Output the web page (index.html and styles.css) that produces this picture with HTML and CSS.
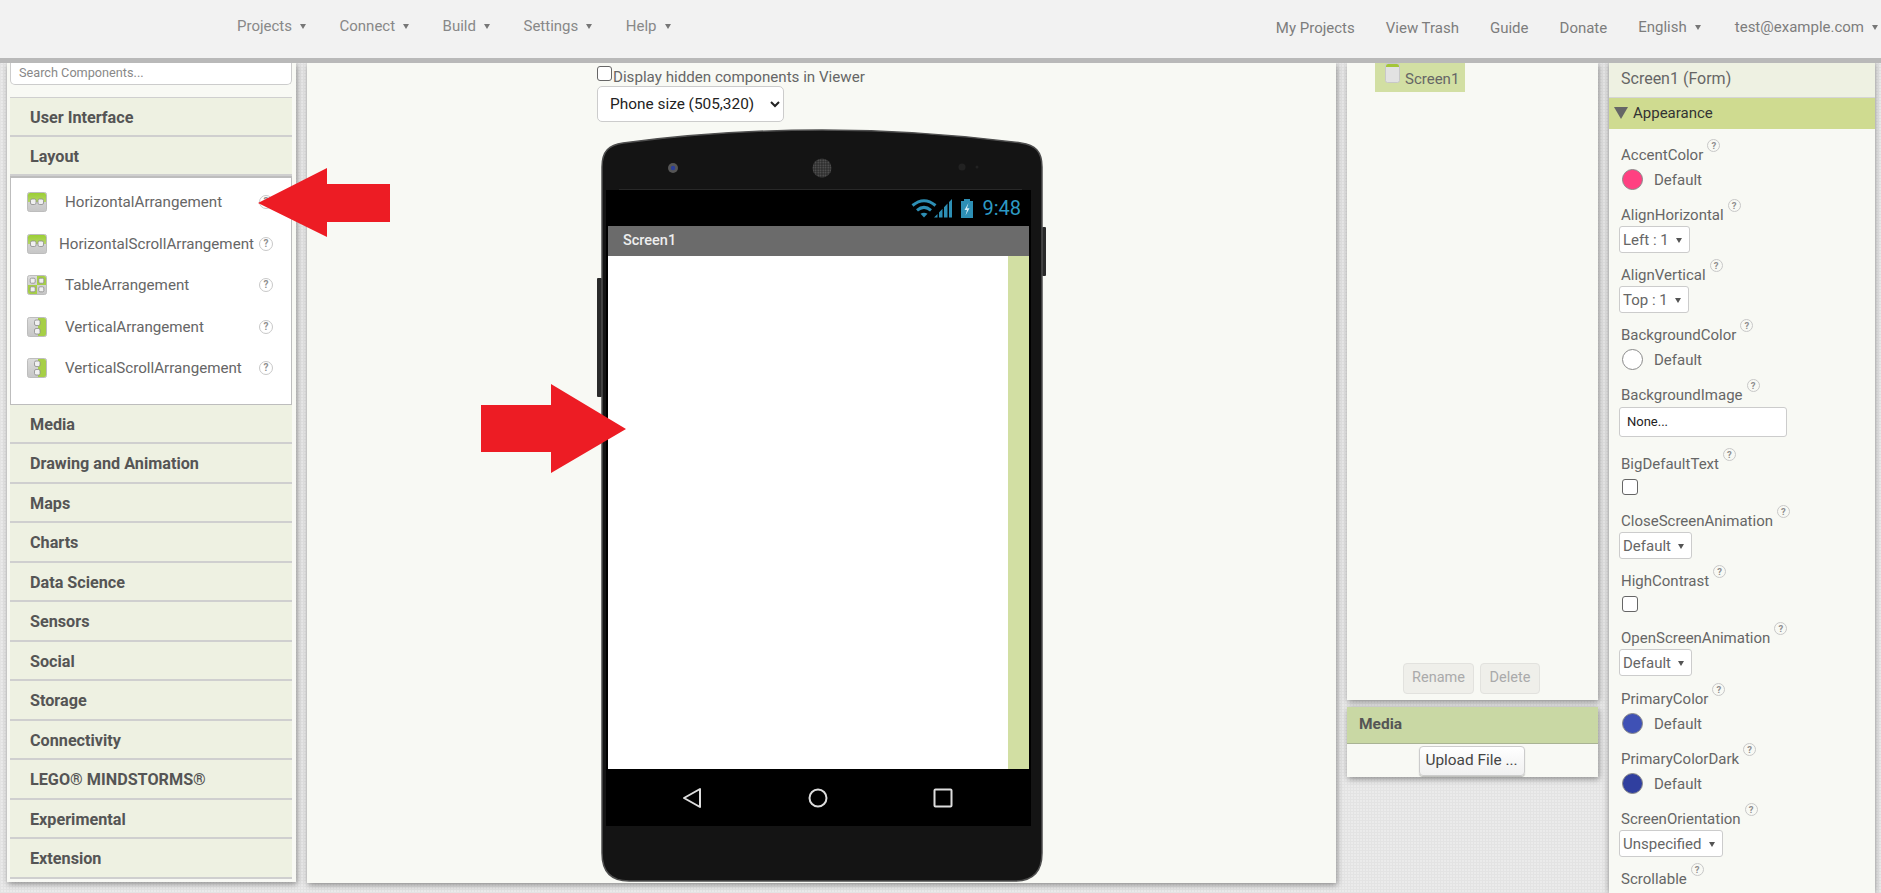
FILE: index.html
```html
<!DOCTYPE html>
<html lang="en">
<head>
<meta charset="utf-8">
<title>MIT App Inventor</title>
<link rel="stylesheet" href="styles.css">
</head>
<body>
<svg class="defs" width="0" height="0" aria-hidden="true">
  <defs>
    <linearGradient id="tile" x1="0" y1="0" x2="0" y2="1"><stop offset="0" stop-color="#dcdcdc"/><stop offset="1" stop-color="#c6c6c6"/></linearGradient>
    <linearGradient id="tile-green" x1="0" y1="0" x2="0" y2="1"><stop offset="0" stop-color="#9bcf33"/><stop offset="1" stop-color="#b4d468"/></linearGradient>
    <pattern id="grille" width="2.500" height="2.500" patternUnits="userSpaceOnUse"><rect width="2.500" height="2.500" fill="#2c2c2c"/><circle cx="1.200" cy="1.200" r=".8" fill="#5e5e5e"/></pattern>
  </defs>
  <symbol id="ic-h" viewBox="0 0 20 20">
    <rect x=".5" y=".5" width="19" height="19" rx="2" fill="url(#tile)" stroke="#bdbdbd"/>
    <path d="M1 3a2 2 0 0 1 2-2h14a2 2 0 0 1 2 2v7H1z" fill="url(#tile-green)"/>
    <rect x="3.500" y="7" width="5.500" height="5.500" rx="1.500" fill="#f0f0f0" stroke="#8c8c8c" stroke-width=".8"/>
    <rect x="11" y="7" width="5.500" height="5.500" rx="1.500" fill="#f0f0f0" stroke="#8c8c8c" stroke-width=".8"/>
  </symbol>
  <symbol id="ic-v" viewBox="0 0 20 20">
    <rect x=".5" y=".5" width="19" height="19" rx="2" fill="url(#tile)" stroke="#bdbdbd"/>
    <path d="M11 1h6a2 2 0 0 1 2 2v14a2 2 0 0 1-2 2h-6z" fill="#a6cf46"/>
    <rect x="7.500" y="3" width="5.500" height="5.500" rx="1.500" fill="#f0f0f0" stroke="#8c8c8c" stroke-width=".8"/>
    <rect x="7.500" y="11.500" width="5.500" height="5.500" rx="1.500" fill="#f0f0f0" stroke="#8c8c8c" stroke-width=".8"/>
  </symbol>
  <symbol id="ic-t" viewBox="0 0 20 20">
    <rect x=".5" y=".5" width="19" height="19" rx="2" fill="url(#tile)" stroke="#bdbdbd"/>
    <path d="M10 1h7a2 2 0 0 1 2 2v7h-9zM1 10h9v9H3a2 2 0 0 1-2-2z" fill="#a6cf46"/>
    <rect x="3.200" y="3.200" width="5" height="5" rx="1.200" fill="#f0f0f0" stroke="#8c8c8c" stroke-width=".8"/>
    <rect x="11.800" y="3.200" width="5" height="5" rx="1.200" fill="#f0f0f0" stroke="#8c8c8c" stroke-width=".8"/>
    <rect x="3.200" y="11.800" width="5" height="5" rx="1.200" fill="#f0f0f0" stroke="#8c8c8c" stroke-width=".8"/>
    <rect x="11.800" y="11.800" width="5" height="5" rx="1.200" fill="#f0f0f0" stroke="#8c8c8c" stroke-width=".8"/>
  </symbol>
</svg>

<header class="topbar">
  <nav class="nav-left">
    <span class="nav-item">Projects<i class="caret"></i></span>
    <span class="nav-item">Connect<i class="caret"></i></span>
    <span class="nav-item">Build<i class="caret"></i></span>
    <span class="nav-item">Settings<i class="caret"></i></span>
    <span class="nav-item">Help<i class="caret"></i></span>
  </nav>
  <nav class="nav-right">
    <span class="nav-link">My Projects</span>
    <span class="nav-link">View Trash</span>
    <span class="nav-link">Guide</span>
    <span class="nav-link">Donate</span>
    <span class="nav-item nav-lang">English<i class="caret"></i></span>
    <span class="nav-item">test@example.com<i class="caret"></i></span>
  </nav>
</header>

<main class="workspace">
  <aside class="palette">
    <div class="search">Search Components...</div>
    <div class="cat cat-first">User Interface</div>
    <div class="cat">Layout</div>
    <ul class="comp-list">
      <li class="comp"><svg class="comp-icon"><use href="#ic-h"/></svg><span class="comp-name">HorizontalArrangement</span><span class="help">?</span></li>
      <li class="comp"><svg class="comp-icon"><use href="#ic-h"/></svg><span class="comp-name comp-name-wide">HorizontalScrollArrangement</span><span class="help">?</span></li>
      <li class="comp"><svg class="comp-icon"><use href="#ic-t"/></svg><span class="comp-name">TableArrangement</span><span class="help">?</span></li>
      <li class="comp"><svg class="comp-icon"><use href="#ic-v"/></svg><span class="comp-name">VerticalArrangement</span><span class="help">?</span></li>
      <li class="comp"><svg class="comp-icon"><use href="#ic-v"/></svg><span class="comp-name">VerticalScrollArrangement</span><span class="help">?</span></li>
    </ul>
    <div class="cat">Media</div>
    <div class="cat">Drawing and Animation</div>
    <div class="cat">Maps</div>
    <div class="cat">Charts</div>
    <div class="cat">Data Science</div>
    <div class="cat">Sensors</div>
    <div class="cat">Social</div>
    <div class="cat">Storage</div>
    <div class="cat">Connectivity</div>
    <div class="cat">LEGO® MINDSTORMS®</div>
    <div class="cat">Experimental</div>
    <div class="cat">Extension</div>
  </aside>

  <section class="viewer">
    <label class="hidden-toggle"><input type="checkbox" class="check">Display hidden components in Viewer</label>
    <select class="size-select"><option>Phone size (505,320)</option></select>
    <div class="phone">
      <svg class="phone-shell" width="450" height="754" viewBox="0 0 450 754" aria-hidden="true">
        <rect x="0" y="149" width="5" height="119" rx="1" fill="#2a2a2a"/>
        <rect x="445" y="98" width="4" height="49" rx="1" fill="#2a2a2a"/>
        <path d="M5 38C5 22 12 16 26 14Q225-12 424 14C438 16 445 22 445 38V724Q445 752 418 752H32Q5 752 5 724Z" fill="#141414" stroke="#4e4e4e" stroke-width="1.500"/>
        <path d="M22 61H425" stroke="#3c3c3c"/>
        <circle cx="76" cy="39" r="5" fill="#555"/>
        <circle cx="76" cy="39" r="2.200" fill="#2b3f9a"/>
        <circle cx="225" cy="39" r="9.500" fill="url(#grille)"/>
        <circle cx="365" cy="38" r="3.500" fill="#222"/>
        <circle cx="380" cy="38" r="1.500" fill="#222"/>
      </svg>
      <div class="screen">
        <div class="status">
          <svg class="status-icons" width="62" height="20" viewBox="0 0 62 20">
            <path d="M1.500 7.500Q13-2 24.500 7.500M6 12.300Q13 6.500 20 12.300" fill="none" stroke="#2d8fb5" stroke-width="3"/>
            <path d="M9.500 15.800Q13 13.500 16.500 15.800L13 19.500z" fill="#2d8fb5"/>
            <path d="M23 19.500 26.500 16v3.500zM28 14.400l3.500-3.600v8.700H28zM33 9.200l3.500-3.600v13.900H33zM38 4l3-3v18.500h-3z" fill="#2d8fb5"/>
            <path d="M50 3h3V1h6v2h3v17H50z" fill="#2d8fb5"/>
            <path d="M57.500 5 53.500 12h2.500l-1.500 5.500 4-7.300H56z" fill="#d5ecf5"/>
          </svg>
          <span class="clock">9:48</span>
        </div>
        <div class="appbar">Screen1</div>
        <div class="canvas"><div class="canvas-main"></div><div class="canvas-scroll"></div></div>
        <div class="softkeys">
          <svg width="20" height="22" viewBox="0 0 20 22"><path d="M18 2v18L2 11z" fill="none" stroke="#ddd" stroke-width="2" stroke-linejoin="round"/></svg>
          <svg width="20" height="20" viewBox="0 0 20 20"><circle cx="10" cy="10" r="8.500" fill="none" stroke="#ddd" stroke-width="2"/></svg>
          <svg width="20" height="20" viewBox="0 0 20 20"><rect x="1.500" y="1.500" width="17" height="17" rx="1" fill="none" stroke="#ddd" stroke-width="2"/></svg>
        </div>
      </div>
    </div>
  </section>

  <div class="side-col">
    <section class="tree">
      <div class="tree-node">
        <svg width="15" height="20" viewBox="0 0 15 20"><rect x=".5" y=".5" width="14" height="19" rx="2" fill="#e2e2e2" stroke="#c8c8c8"/><path d="M1 3a2 2 0 0 1 2-2h9a2 2 0 0 1 2 2v1H1z" fill="#a4c639"/></svg>
        <span>Screen1</span>
      </div>
      <div class="tree-actions">
        <span class="btn-off btn-rename">Rename</span>
        <span class="btn-off btn-delete">Delete</span>
      </div>
    </section>
    <section class="media">
      <h2 class="media-head">Media</h2>
      <div class="media-body"><span class="btn-upload">Upload File ...</span></div>
    </section>
  </div>

  <aside class="props">
    <div class="props-title">Screen1 (Form)</div>
    <div class="props-group"><i class="group-tri"></i>Appearance</div>
    <div class="prop"><div class="prop-label">AccentColor<span class="help help-up">?</span></div><div class="swatch-row"><i class="swatch swatch-accent"></i>Default</div></div>
    <div class="prop"><div class="prop-label">AlignHorizontal<span class="help help-up">?</span></div><div class="drop drop-left">Left : 1<i class="caret caret-dark"></i></div></div>
    <div class="prop"><div class="prop-label">AlignVertical<span class="help help-up">?</span></div><div class="drop drop-top">Top : 1<i class="caret caret-dark"></i></div></div>
    <div class="prop"><div class="prop-label">BackgroundColor<span class="help help-up">?</span></div><div class="swatch-row"><i class="swatch swatch-white"></i>Default</div></div>
    <div class="prop prop-image"><div class="prop-label">BackgroundImage<span class="help help-up">?</span></div><div class="image-input">None...</div></div>
    <div class="prop prop-check"><div class="prop-label">BigDefaultText<span class="help help-up">?</span></div><input type="checkbox" class="check check-prop"></div>
    <div class="prop"><div class="prop-label">CloseScreenAnimation<span class="help help-up">?</span></div><div class="drop drop-def">Default<i class="caret caret-dark"></i></div></div>
    <div class="prop prop-check"><div class="prop-label">HighContrast<span class="help help-up">?</span></div><input type="checkbox" class="check check-prop"></div>
    <div class="prop prop-open"><div class="prop-label">OpenScreenAnimation<span class="help help-up">?</span></div><div class="drop drop-def">Default<i class="caret caret-dark"></i></div></div>
    <div class="prop"><div class="prop-label">PrimaryColor<span class="help help-up">?</span></div><div class="swatch-row"><i class="swatch swatch-primary"></i>Default</div></div>
    <div class="prop"><div class="prop-label">PrimaryColorDark<span class="help help-up">?</span></div><div class="swatch-row"><i class="swatch swatch-dark"></i>Default</div></div>
    <div class="prop"><div class="prop-label">ScreenOrientation<span class="help help-up">?</span></div><div class="drop drop-orient">Unspecified<i class="caret caret-dark"></i></div></div>
    <div class="prop"><div class="prop-label">Scrollable<span class="help help-up">?</span></div></div>
  </aside>

  <svg class="arrow arrow-one" width="132" height="69" viewBox="0 0 132 69" aria-hidden="true"><path d="M0 35 69 0v16h63v38H69v15z" fill="#ed1c24"/></svg>
  <svg class="arrow arrow-two" width="145" height="89" viewBox="0 0 145 89" aria-hidden="true"><path d="M145 45 70 0v21H0v47h70v21z" fill="#ed1c24"/></svg>
</main>
</body>
</html>
```

FILE: styles.css
```css
* { box-sizing: border-box; }
html, body { margin: 0; height: 100%; }
body {
  width: 1881px;
  height: 893px;
  overflow: hidden;
  font-family: Roboto, "Liberation Sans", sans-serif;
  font-size: 15px;
  color: #666;
  background-color: #ebebeb;
  background-image:
    repeating-linear-gradient(0deg, #e3e3e3 0 1px, transparent 1px 3px),
    repeating-linear-gradient(90deg, #e3e3e3 0 1px, transparent 1px 3px);
}
.defs { position: absolute; }

/* top bar */
.topbar {
  height: 63px;
  background: #f2f2f2;
  border-bottom: 5px solid #b9b9b9;
  display: flex;
  justify-content: space-between;
  color: #888;
  position: relative;
  z-index: 2;
}
.nav-left { display: flex; gap: 47.500px; padding: 17px 0 0 237px; }
.nav-right { display: flex; gap: 31px; padding: 18px 17px 0 0; color: #7d7d7d; }
.nav-item, .nav-link { display: block; line-height: 18px; white-space: nowrap; }
.nav-link { line-height: 20px; }
.nav-lang { margin-right: 17px; }
.nav-item { position: relative; }
.caret {
  position: absolute;
  right: -14px;
  top: 7px;
  border-left: 3px solid transparent;
  border-right: 3px solid transparent;
  border-top: 5px solid #777;
}
.caret-dark { border-top-color: #555; right: 7px; top: 11px; }

/* workspace */
.workspace {
  position: relative;
  height: 830px;
  display: flex;
  gap: 11px;
  padding-left: 7px;
  align-items: flex-start;
}

/* palette */
.palette {
  width: 289px;
  height: 819px;
  padding: 0 4px 0 3px;
  background: #f8f9f4;
  box-shadow: 1px 2px 6px rgba(0, 0, 0, .4);
  flex: none;
}
.search {
  height: 22px;
  margin-bottom: 12px;
  padding: 0 0 3px 8px;
  font-size: 12.700px;
  line-height: 19px;
  color: #888;
  background: #fff;
  border: 1px solid #ccc;
  border-top: 0;
  border-radius: 0 0 5px 5px;
}
.cat {
  height: 39.5px;
  padding-left: 20px;
  font-weight: 700;
  font-size: 16.200px;
  line-height: 39px;
  color: #555;
  background: #eef1e2;
  border-bottom: 2px solid #cfcfcf;
}
.cat-first { border-top: 1px solid #cfcfcf; }
.comp-list {
  height: 228.500px;
  margin: 0;
  padding: 3.500px 0 0 16px;
  list-style: none;
  background: #fff;
  border: 1px solid #bdbdbd;
  border-top-width: 2px;
}
.comp { height: 41.500px; display: flex; align-items: center; }
.comp-icon { width: 20px; height: 20px; flex: none; }
.comp-name { width: 193px; margin-left: 12px; padding-left: 6px; font-size: 15.150px; white-space: nowrap; flex: none; }
.comp-name-wide { padding-left: 0; }
.help {
  width: 14px;
  height: 14px;
  margin-left: 7px;
  flex: none;
  display: inline-flex;
  align-items: center;
  justify-content: center;
  font-size: 10px;
  font-weight: 700;
  line-height: 1;
  color: #8f8f8f;
  border: 1.500px solid #c8c8c8;
  border-radius: 50%;
}

/* viewer */
.viewer {
  width: 1029px;
  height: 820px;
  padding: 3px 0 0 290px;
  background: #f8f9f4;
  box-shadow: 1px 2px 6px rgba(0, 0, 0, .4);
  flex: none;
}
.hidden-toggle { display: flex; align-items: flex-start; height: 20px; font-size: 15.150px; line-height: 23px; color: #666; }
.check {
  appearance: none;
  width: 15px;
  height: 15px;
  margin: 0 1px 0 0;
  background: #fff;
  border: 1.500px solid #666;
  border-radius: 3px;
  flex: none;
}
.size-select {
  display: block;
  width: 187px;
  height: 36px;
  padding: 0 4px 0 8px;
  font: 15.400px Roboto, "Liberation Sans", sans-serif;
  color: #222;
  background-color: #fff;
  border: 1px solid #ccc;
  border-radius: 5px;
}
.phone {
  position: relative;
  width: 450px;
  height: 754px;
  margin: 7px 0 0 0;
  padding: 61px 0 0 9px;
}
.phone-shell { position: absolute; left: 0; top: 0; }
.screen { position: relative; width: 425px; background: #000; }
.status {
  height: 36px;
  display: flex;
  justify-content: flex-end;
  align-items: center;
  gap: 9px;
  padding-right: 10px;
}
.clock { font-size: 20px; color: #2d9ac4; }
.appbar {
  height: 30px;
  margin: 0 2px;
  padding-left: 15px;
  font-size: 14.500px;
  font-weight: 500;
  line-height: 29px;
  color: #eee;
  background: #6b6b6b;
}
.canvas { height: 513px; margin: 0 2px; display: flex; }
.canvas-main { flex: 1; background: #fff; }
.canvas-scroll { width: 21px; background: #d2dfa3; }
.softkeys {
  height: 57px;
  padding: 0 78px 0 76px;
  display: flex;
  justify-content: space-between;
  align-items: center;
}

/* right column */
.side-col { width: 251px; flex: none; display: flex; flex-direction: column; gap: 7px; }
.tree {
  height: 637px;
  padding-left: 28px;
  display: flex;
  flex-direction: column;
  justify-content: space-between;
  background: #f8f9f4;
  box-shadow: 1px 2px 6px rgba(0, 0, 0, .4);
}
.tree-node {
  width: 90px;
  height: 29px;
  padding: 0 0 0 10px;
  display: flex;
  align-items: flex-start;
  gap: 5px;
  line-height: 32px;
  font-size: 15px;
  background: #d2dfa3;
}
.tree-actions { display: flex; gap: 6px; padding: 0 0 6px 28px; }
.btn-off {
  height: 31px;
  line-height: 28px;
  text-align: center;
  font-size: 14.500px;
  color: #aaa;
  background: #efefea;
  border: 1px solid #e2e2de;
  border-radius: 4px;
}
.btn-rename { width: 71px; }
.btn-delete { width: 60px; }
.media { height: 70px; background: #f8f9f4; box-shadow: 1px 2px 6px rgba(0, 0, 0, .4); }
.media-head {
  height: 37px;
  margin: 0;
  padding-left: 12px;
  font-size: 15.500px;
  line-height: 34px;
  color: #555;
  background: #c9d8a4;
  border-bottom: 1px solid #a9b394;
}
.media-body { display: flex; justify-content: center; padding-top: 2px; }
.btn-upload {
  width: 106px;
  height: 30px;
  margin-left: -2px;
  text-align: center;
  font-size: 15.400px;
  line-height: 27px;
  color: #444;
  background: linear-gradient(#fff, #f0f0f0);
  border: 1px solid #ccc;
  border-radius: 4px;
  box-shadow: 0 1px 1px rgba(0, 0, 0, .25);
}

/* properties */
.props {
  width: 266px;
  height: 830px;
  overflow: hidden;
  background: #f8f9f4;
  box-shadow: 0 0 6px rgba(0, 0, 0, .4);
  flex: none;
}
.props-title {
  height: 35px;
  padding-left: 12px;
  font-size: 16px;
  line-height: 32px;
  background: #eef1e2;
  border-bottom: 1px solid #d5d5d5;
}
.props-group {
  height: 31px;
  margin-bottom: 16px;
  padding-left: 24px;
  position: relative;
  font-size: 15px;
  line-height: 31px;
  color: #333;
  background: #cfdb90;
}
.group-tri {
  position: absolute;
  left: 5px;
  top: 9px;
  border-left: 7px solid transparent;
  border-right: 7px solid transparent;
  border-top: 12px solid #666;
}
.prop { height: 60px; padding-left: 10px; }
.prop-image { height: 69px; }
.prop-check { height: 57px; }
.prop-open { height: 61px; }
.prop-label { height: 21px; padding-left: 2px; display: flex; line-height: 20px; white-space: nowrap; }
.help-up { margin: -6px 0 0 4px; width: 13px; height: 13px; font-size: 9.500px; }
.swatch-row { height: 27px; display: flex; align-items: center; gap: 11px; padding-left: 3px; }
.swatch { width: 21px; height: 21px; border-radius: 50%; border: 1px solid #8a8a8a; flex: none; }
.swatch-accent { background: #ff4081; }
.swatch-white { background: #fff; }
.swatch-primary { background: #3f51b5; }
.swatch-dark { background: #303f9f; }
.drop {
  position: relative;
  width: 71px;
  height: 27px;
  padding-left: 3px;
  line-height: 26px;
  background: #fff;
  border: 1px solid #ccc;
  border-radius: 3px;
}
.drop-top { width: 70px; }
.drop-def { width: 73px; }
.drop-orient { width: 104px; }
.image-input {
  width: 168px;
  height: 30px;
  margin-top: 1px;
  padding-left: 7px;
  font-size: 13px;
  line-height: 28px;
  color: #222;
  background: #fff;
  border: 1px solid #ccc;
  border-radius: 3px;
}
.check-prop { display: block; width: 16px; height: 16px; margin: 4px 0 0 3px; }

/* annotation arrows */
.arrow { position: absolute; z-index: 3; }
.arrow-one { left: 258px; top: 105px; }
.arrow-two { left: 481px; top: 321px; }
```
